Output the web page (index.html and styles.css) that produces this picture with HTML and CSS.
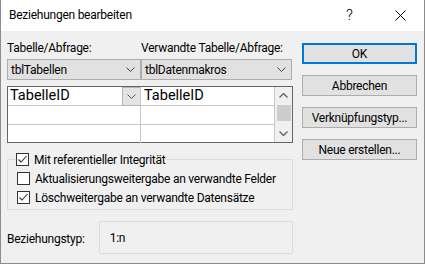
FILE: index.html
```html
<!DOCTYPE html>
<html>
<head>
<meta charset="utf-8">
<link rel="stylesheet" href="styles.css">
</head>
<body>
<div class="window">
  <div class="titlebar">
    <span class="title">Beziehungen bearbeiten</span>
    <span class="help">?</span>
    <svg class="close" width="11" height="11" viewBox="0 0 11 11"><path d="M0.5 0.5 L10.5 10.5 M10.5 0.5 L0.5 10.5" stroke="#000" stroke-width="1" fill="none"/></svg>
  </div>
  <div class="content">
    <div class="left">
      <div class="labels">
        <span class="lbl lbl1">Tabelle/Abfrage:</span>
        <span class="lbl lbl2">Verwandte Tabelle/Abfrage:</span>
      </div>
      <div class="combos">
        <div class="combo c1"><span>tblTabellen</span><svg class="chev" width="9" height="5" viewBox="0 0 9 5"><path d="M0.5 0.5 L4.5 4.5 L8.5 0.5" stroke="#444" fill="none"/></svg></div>
        <div class="combo c2"><span>tblDatenmakros</span><svg class="chev" width="9" height="5" viewBox="0 0 9 5"><path d="M0.5 0.5 L4.5 4.5 L8.5 0.5" stroke="#444" fill="none"/></svg></div>
      </div>
      <div class="grid">
        <div class="cells">
          <div class="row">
            <div class="cell a"><span>TabelleID</span><div class="dd"><svg width="9" height="5" viewBox="0 0 9 5"><path d="M0.5 0.5 L4.5 4.5 L8.5 0.5" stroke="#555" fill="none"/></svg></div></div>
            <div class="cell b"><span>TabelleID</span></div>
          </div>
          <div class="row">
            <div class="cell a"></div>
            <div class="cell b"></div>
          </div>
          <div class="row last">
            <div class="cell a"></div>
            <div class="cell b"></div>
          </div>
        </div>
        <div class="scroll">
          <svg class="arr" width="9" height="5" viewBox="0 0 9 5"><path d="M0.5 4.5 L4.5 0.5 L8.5 4.5" stroke="#606060" stroke-width="1.3" fill="none"/></svg>
          <div class="thumb"></div>
          <div class="spacer"></div>
          <svg class="arr" width="9" height="5" viewBox="0 0 9 5"><path d="M0.5 0.5 L4.5 4.5 L8.5 0.5" stroke="#606060" stroke-width="1.3" fill="none"/></svg>
        </div>
      </div>
      <fieldset class="group">
        <legend class="legend"><span class="cb checked"><svg width="11" height="11" viewBox="0 0 11 11"><path d="M1.5 5.5 L4 8 L9.5 2" stroke="#333" stroke-width="1.1" fill="none"/></svg></span><span>Mit referentieller Integrität</span></legend>
        <div class="opt"><span class="cb"></span><span>Aktualisierungsweitergabe an verwandte Felder</span></div>
        <div class="opt"><span class="cb checked"><svg width="11" height="11" viewBox="0 0 11 11"><path d="M1.5 5.5 L4 8 L9.5 2" stroke="#333" stroke-width="1.1" fill="none"/></svg></span><span>Löschweitergabe an verwandte Datensätze</span></div>
      </fieldset>
      <div class="typerow">
        <span class="typelbl">Beziehungstyp:</span>
        <div class="typebox">1:n</div>
      </div>
    </div>
    <div class="buttons">
      <div class="btn default">OK</div>
      <div class="btn">Abbrechen</div>
      <div class="btn">Verknüpfungstyp...</div>
      <div class="btn">Neue erstellen...</div>
    </div>
  </div>
</div>
</body>
</html>
```
FILE: styles.css
```css
* { box-sizing: border-box; }
html, body { margin: 0; padding: 0; }
body { font-family: "Roboto", "Noto Sans", sans-serif; font-size: 12px; letter-spacing: -0.25px; color: #000; background: #f0f0f0; white-space: nowrap; }
.window { width: 425px; height: 264px; border: 1px solid #8c8c8c; border-top: none; background: #f0f0f0; overflow: hidden; }
.titlebar { height: 31px; background: #fff; display: flex; align-items: center; padding-left: 8px; }
.title { flex: 1; margin-top: -1px; }
.help { font-size: 15px; font-weight: 300; width: 12px; margin-right: 37px; margin-top: -1px; }
.close { margin-right: 18px; margin-top: -1px; }
.content { display: flex; padding-left: 6px; }
.left { width: 286px; padding-top: 10px; }
.labels { display: flex; height: 18px; line-height: 15px; }
.lbl1 { width: 134px; }
.combos { display: flex; height: 21px; }
.combo { height: 21px; background: #e1e1e1; border: 1px solid #adadad; display: flex; align-items: center; padding-left: 3px; padding-right: 5px; justify-content: space-between; }
.c1 { width: 134px; }
.c2 { width: 151px; }
.grid { margin-top: 6px; width: 286px; height: 57px; border: 1px solid #646464; background: #fff; display: flex; }
.cells { width: 266px; }
.row { display: flex; height: 19px; border-bottom: 1px solid #c8c8c8; }
.row.last { border-bottom: none; height: 18px; }
.cell { height: 100%; display: flex; align-items: center; font-size: 14.5px; letter-spacing: 0; }
.cell.a { width: 133px; border-right: 1px solid #c8c8c8; padding-left: 2px; justify-content: space-between; }
.cell.b { width: 133px; padding-left: 3px; }
.cell span { margin-top: -1px; }
.dd { width: 18px; height: 19px; align-self: flex-start; background: #e4e4e4; border: 1px solid #b4b4b4; border-right: none; display: flex; align-items: center; justify-content: center; }
.scroll { width: 18px; border-left: 1px solid #c8c8c8; background: #f0f0f0; display: flex; flex-direction: column; align-items: center; padding-top: 6px; padding-bottom: 6px; }
.thumb { width: 14px; height: 16px; background: #cdcdcd; margin-top: 7px; }
.spacer { flex: 1; }
.group { margin: 9px 0 0 0; width: 286px; height: 58px; border: 1px solid #dcdcdc; padding: 0 0 0 8px; }
.legend { padding: 0 1px 0 0; margin-left: 0; display: flex; align-items: center; height: 15px; }
.cb { width: 13px; height: 13px; border: 1px solid #333; background: #fff; display: inline-flex; align-items: center; justify-content: center; margin-right: 5px; flex: none; }
.opt { display: flex; align-items: center; height: 19px; padding-left: 1px; }
.opt:first-of-type { margin-top: 2px; }
.typerow { display: flex; align-items: center; margin-top: 11px; }
.typelbl { width: 92px; margin-top: 2px; }
.typebox { width: 195px; height: 33px; border: 1px solid #dcdcdc; display: flex; align-items: center; padding-left: 10px; }
.buttons { margin-left: 9px; padding-top: 12px; display: flex; flex-direction: column; }
.btn { width: 115px; height: 21px; background: #e1e1e1; border: 1px solid #adadad; display: flex; align-items: center; justify-content: center; margin-bottom: 11px; }
.btn.default { border: 2px solid #0078d7; }
```
